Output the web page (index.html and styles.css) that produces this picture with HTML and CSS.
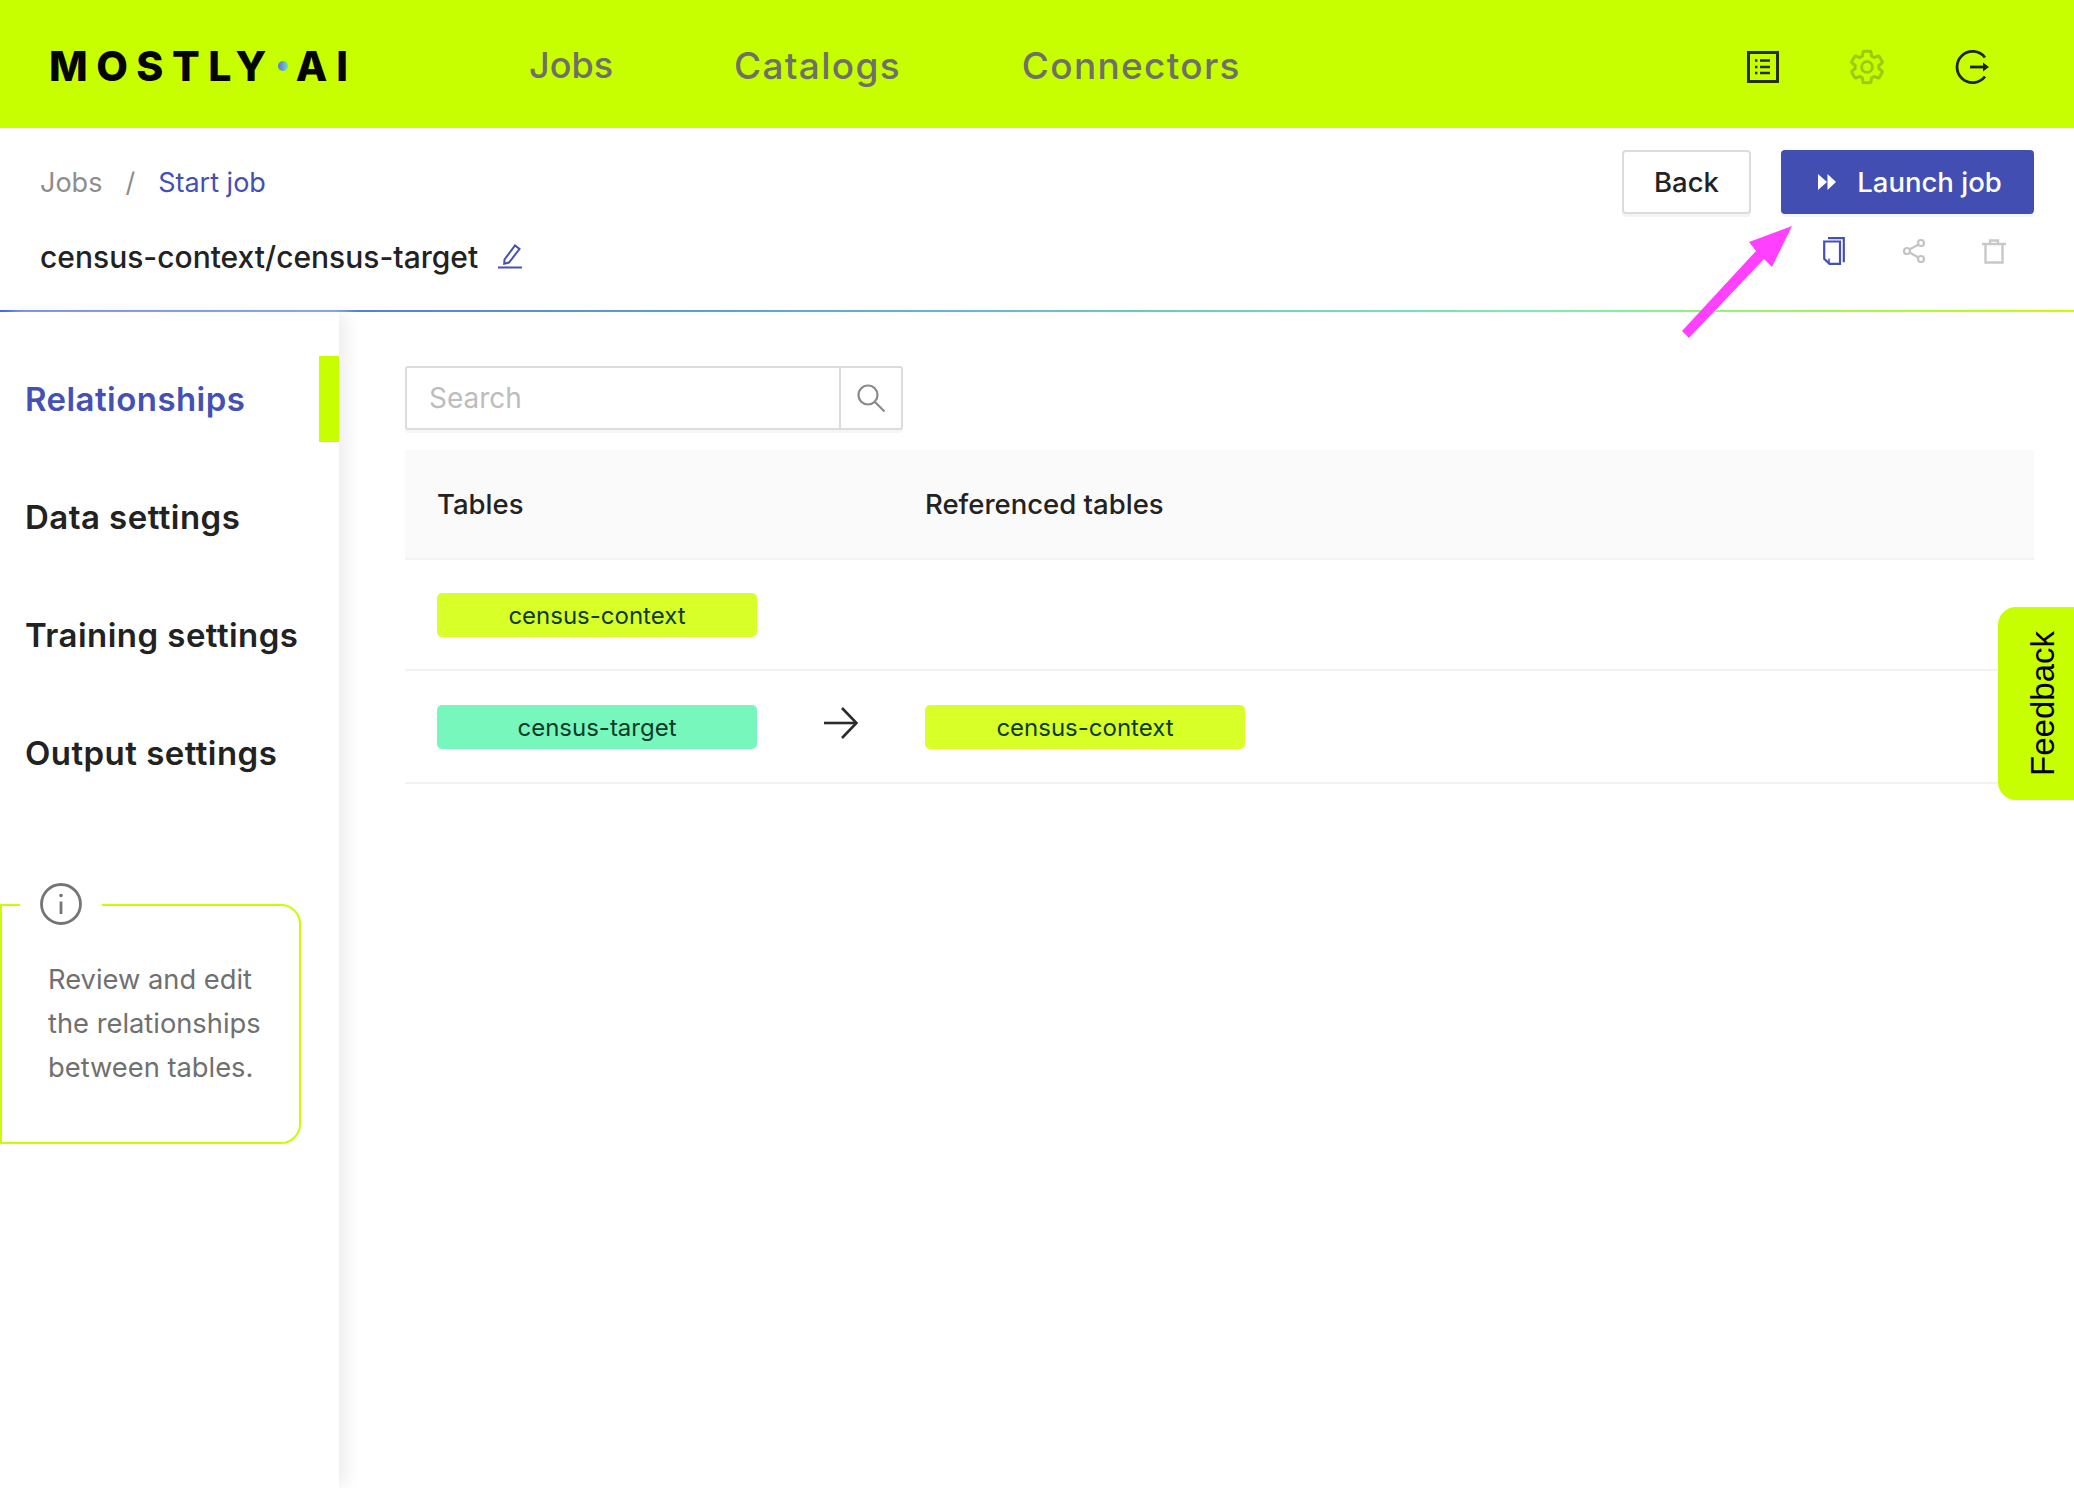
FILE: index.html
```html
<!DOCTYPE html>
<html lang="en">
<head>
<meta charset="utf-8">
<title>Start job</title>
<link rel="stylesheet" href="styles.css">
</head>
<body>
<header class="topbar">
  <div class="logo"><span>MOSTLY</span><i class="logo-dot"></i><span class="logo-ai">AI</span></div>
  <nav class="topnav"><a class="topnav-first">Jobs</a><a>Catalogs</a><a>Connectors</a></nav>
  <div class="topicons">
    <svg class="ic-list" viewBox="0 0 32 32" fill="none" stroke="#26300a"><rect x="1.5" y="1.5" width="29" height="29" stroke-width="3"/><path d="M13 9.5h10M13 16h10M13 22h10" stroke-width="2.4"/><path d="M8 9.5h2.4M8 16h2.4M8 22h2.4" stroke-width="2.6"/></svg>
    <svg class="ic-gear" viewBox="0 0 24 24" fill="none" stroke="#9ccb0c" stroke-width="1.9"><path d="M19.43 12.98c.04-.32.07-.64.07-.98 0-.34-.03-.66-.07-.98l2.11-1.65c.19-.15.24-.42.12-.64l-2-3.46c-.09-.16-.26-.25-.44-.25-.06 0-.12.01-.17.03l-2.49 1c-.52-.4-1.08-.73-1.69-.98l-.38-2.65C14.46 2.18 14.25 2 14 2h-4c-.25 0-.46.18-.49.42l-.38 2.65c-.61.25-1.17.59-1.69.98l-2.49-1c-.06-.02-.12-.03-.18-.03-.17 0-.34.09-.43.25l-2 3.46c-.13.22-.07.49.12.64l2.11 1.65c-.04.32-.07.65-.07.98 0 .33.03.66.07.98l-2.11 1.65c-.19.15-.24.42-.12.64l2 3.46c.09.16.26.25.44.25.06 0 .12-.01.17-.03l2.49-1c.52.4 1.08.73 1.69.98l.38 2.65c.03.24.24.42.49.42h4c.25 0 .46-.18.49-.42l.38-2.65c.61-.25 1.17-.59 1.69-.98l2.49 1c.06.02.12.03.18.03.17 0 .34-.09.43-.25l2-3.46c.12-.22.07-.49-.12-.64l-2.11-1.65z"/><circle cx="12" cy="12" r="3.4"/></svg>
    <svg class="ic-logout" viewBox="0 0 36 36" fill="none" stroke="#1f2410"><path d="M31 8.5A15.6 15.6 0 1 0 31 27.500" stroke-width="2.8"/><path d="M16 18h15" stroke-width="2.8"/><path d="M29 13.500l6 4.500-6 4.500z" fill="#1f2410" stroke="none"/></svg>
  </div>
</header>

<section class="subbar">
  <div class="subbar-left">
    <div class="crumbs"><span class="crumb">Jobs</span><span class="crumb-sep">/</span><span class="crumb-cur">Start job</span></div>
    <div class="jobtitle"><span>census-context/census-target</span>
      <svg class="ic-edit" viewBox="0 0 26 26" fill="none" stroke="#4450b4" stroke-width="2"><path d="M7.500 16.500 18 2.500l4.500 3.500L12 19.500l-4.800 1.200z"/><path d="M1 24.500h24"/></svg>
    </div>
  </div>
  <div class="subbar-right">
    <div class="btns">
      <button class="btn btn-back">Back</button>
      <button class="btn btn-launch"><svg class="ic-ff" viewBox="0 0 18 16" fill="#fff"><path d="M0 0l9 8-9 8zM9.500 0l8.500 8-8.500 8z"/></svg>Launch job</button>
    </div>
    <div class="actions">
      <svg class="ic-copy" viewBox="0 0 22 28" fill="none" stroke="#4450b4" stroke-width="2.200"><path d="M5 1.200h15.800v24"/><path d="M1.200 4.500h15.800v22.300H6.500l-5.300-5z"/><path d="M6 21.500v5" stroke-width="1.500"/></svg>
      <svg class="ic-share" viewBox="0 0 22 24" fill="none" stroke="#c4c4c4" stroke-width="2.200"><circle cx="4" cy="12" r="3"/><circle cx="18" cy="4" r="3"/><circle cx="18" cy="20" r="3"/><path d="M6.600 10.500 15.400 5.500M6.600 13.500l8.800 5"/></svg>
      <svg class="ic-trash" viewBox="0 0 24 25" fill="none" stroke="#c8c8c8" stroke-width="2.400"><path d="M0 5h24"/><path d="M8 5V1.500h8V5"/><path d="M3.500 5v18.500h17V5"/></svg>
    </div>
  </div>
</section>
<div class="rule"></div>

<main class="main">
  <aside class="sidebar">
    <ul class="sidenav">
      <li class="active">Relationships</li>
      <li>Data settings</li>
      <li>Training settings</li>
      <li>Output settings</li>
    </ul>
    <div class="infobox">
      <svg class="ic-info" viewBox="0 0 44 44" fill="none" stroke="#757575" stroke-width="2.800"><circle cx="22" cy="22" r="19.500"/><path d="M22 19.500V32"/><circle cx="22" cy="13.500" r="1.800" fill="#757575" stroke="none"/></svg>
      <p>Review and edit the relationships between tables.</p>
    </div>
  </aside>
  <section class="content">
    <div class="search">
      <div class="search-input">Search</div>
      <div class="search-btn"><svg viewBox="0 0 28 28" fill="none" stroke="#8a8a8a" stroke-width="2.200"><circle cx="11" cy="11" r="9.500"/><path d="M18 18l9.500 9.500"/></svg></div>
    </div>
    <div class="table">
      <div class="row head"><div class="col-a">Tables</div><div class="col-m"></div><div class="col-b">Referenced tables</div></div>
      <div class="row r1"><div class="col-a"><span class="tag lime">census-context</span></div></div>
      <div class="row r2"><div class="col-a"><span class="tag teal">census-target</span></div>
        <div class="col-m"><svg viewBox="0 0 34 32" fill="none" stroke="#2b2b2b" stroke-width="2.600"><path d="M0 16h32"/><path d="M18 1l14.500 15L18 31"/></svg></div>
        <div class="col-b"><span class="tag lime">census-context</span></div></div>
    </div>
  </section>
</main>

<div class="feedback"><span>Feedback</span></div>
<svg class="pointer" viewBox="0 0 120 120" fill="#ff40ff"><path d="M115 1 95 42 87 34 12 113 5 106 79 26 72 17z"/></svg>
</body>
</html>
```

FILE: styles.css
```css
* { box-sizing: border-box; }
html, body { margin: 0; height: 100%; }
body {
  width: 2074px; height: 1488px; overflow: hidden; position: relative;
  background: #fff; color: #222;
  font-family: Inter, "Liberation Sans", sans-serif;
}
svg { display: block; }

.topbar {
  height: 128px; background: #c8ff00; display: flex; align-items: center;
  padding-left: 49px;
}
.logo {
  width: 299px; display: flex; align-items: center; justify-content: space-between;
  font-size: 41px; font-weight: 800; color: #050505; letter-spacing: 8.500px; line-height: 1;
  margin-top: 4px;
}
.logo-ai { letter-spacing: 9px; margin-right: -9px; }
.logo-dot {
  width: 10px; height: 10px; border-radius: 50%;
  background: linear-gradient(90deg, #5a6cf5, #6ee0b0);
  margin-left: -4px;
}
.topnav { display: flex; gap: 121px; margin-left: 181px; font-size: 37px; font-weight: 500; color: #6f7068; letter-spacing: 1.300px; margin-top: 2px; }
.topnav-first { width: 84px; font-size: 36px; letter-spacing: 0; }
.topicons { margin-left: auto; display: flex; align-items: center; padding-right: 84px; margin-top: 6px; }
.ic-list { width: 32px; height: 32px; }
.ic-gear { width: 38px; height: 38px; margin-left: 69px; }
.ic-logout { width: 36px; height: 36px; margin-left: 68px; }

.subbar { height: 182px; display: flex; justify-content: space-between; padding: 22px 40px 0; }
.crumbs { display: flex; align-items: center; height: 64px; font-size: 27px; }
.crumb { color: #8d8d8d; }
.crumb-sep { color: #8d8d8d; margin: 0 23px 0 23px; }
.crumb-cur { color: #4450b4; }
.jobtitle { display: flex; align-items: center; gap: 19px; margin-top: 25px; font-size: 30px; font-weight: 500; color: #222; }
.ic-edit { width: 26px; height: 26px; margin-top: -3px; }

.subbar-right { display: flex; flex-direction: column; align-items: flex-end; }
.btns { display: flex; gap: 30px; }
.btn {
  height: 64px; border-radius: 4px; font-family: Inter, "Liberation Sans", sans-serif;
  font-size: 27.500px; font-weight: 500; display: flex; align-items: center; justify-content: center;
  box-shadow: 0 3px 0 #f3f4f6;
}
.btn-back { width: 129px; background: #fff; border: 2px solid #dcdcdc; color: #222; }
.btn-launch { width: 253px; background: #434eb3; border: 0; color: #fff; padding: 0 0 0 5px; }
.ic-ff { width: 18px; height: 16px; margin-right: 21px; }
.actions { display: flex; align-items: center; margin-top: 23px; padding-right: 28px; }
.ic-copy { width: 22px; height: 28px; }
.ic-share { width: 22px; height: 24px; margin-left: 58px; }
.ic-trash { width: 24px; height: 25px; margin-left: 57px; }

.rule { height: 2px; background: linear-gradient(90deg, #4460f0, #78f0b0 75%, #c8ff00); }

.main { display: flex; height: 1176px; }
.sidebar { width: 339px; flex: none; position: relative; box-shadow: 10px 0 14px -2px #efefef; padding-top: 44px; }
.sidenav { list-style: none; margin: 0; padding: 0; }
.sidenav li {
  height: 86px; margin-bottom: 32px; display: flex; align-items: center; padding-left: 25px;
  font-size: 33px; font-weight: 600; color: #222; letter-spacing: .45px;
}
.sidenav li.active { color: #4450b4; border-right: 20px solid #c8ff00; }
.infobox {
  position: relative; width: 301px; height: 240px; margin-top: 108px;
  border: 2px solid #c8ff00; border-radius: 0 20px 20px 0;
  padding: 52px 20px 0 46px;
}
.ic-info { position: absolute; left: 18px; top: -24px; width: 82px; height: 44px; padding: 0 19px; background: #fff; }
.infobox p { margin: 0; font-size: 27.300px; line-height: 44px; color: #707070; }

.content { flex: 1; padding: 54px 40px 0 66px; }
.search { display: flex; width: 498px; height: 64px; border: 2px solid #dcdcdc; border-radius: 3px; box-shadow: 0 3px 0 #f6f6f6; }
.search-input { flex: 1; padding-left: 22px; display: flex; align-items: center; font-size: 28px; color: #bdbdbd; }
.search-btn { width: 62px; border-left: 2px solid #dcdcdc; display: flex; align-items: center; justify-content: center; }
.search-btn svg { width: 28px; height: 28px; }

.table { margin-top: 20px; }
.row { display: flex; align-items: center; padding-left: 32px; border-bottom: 2px solid #f2f2f2; }
.head { height: 110px; background: #fafafa; font-size: 27.500px; font-weight: 500; color: #222; }
.r1 { height: 111px; }
.r2 { height: 113px; }
.col-a { width: 320px; }
.col-m { width: 168px; display: flex; justify-content: center; }
.col-m svg { width: 34px; height: 32px; margin-top: -8px; }
.tag { display: flex; align-items: center; justify-content: center; width: 320px; height: 44px; padding-top: 2px; border-radius: 5px; font-size: 24px; color: #0d3b2a; }
.lime { background: #d8ff28; }
.teal { background: #78f7bd; }

.feedback {
  position: absolute; right: 0; top: 607px; width: 76px; height: 193px;
  background: #c8ff00; border-radius: 18px 0 0 18px;
  display: flex; align-items: center; justify-content: center;
}
.feedback span {
  writing-mode: vertical-rl; transform: rotate(180deg);
  font-family: "Liberation Sans", Arial, sans-serif; font-size: 33px; color: #000;
  margin-left: 14px;
}
.pointer { position: absolute; left: 1677px; top: 225px; width: 120px; height: 120px; }
```
